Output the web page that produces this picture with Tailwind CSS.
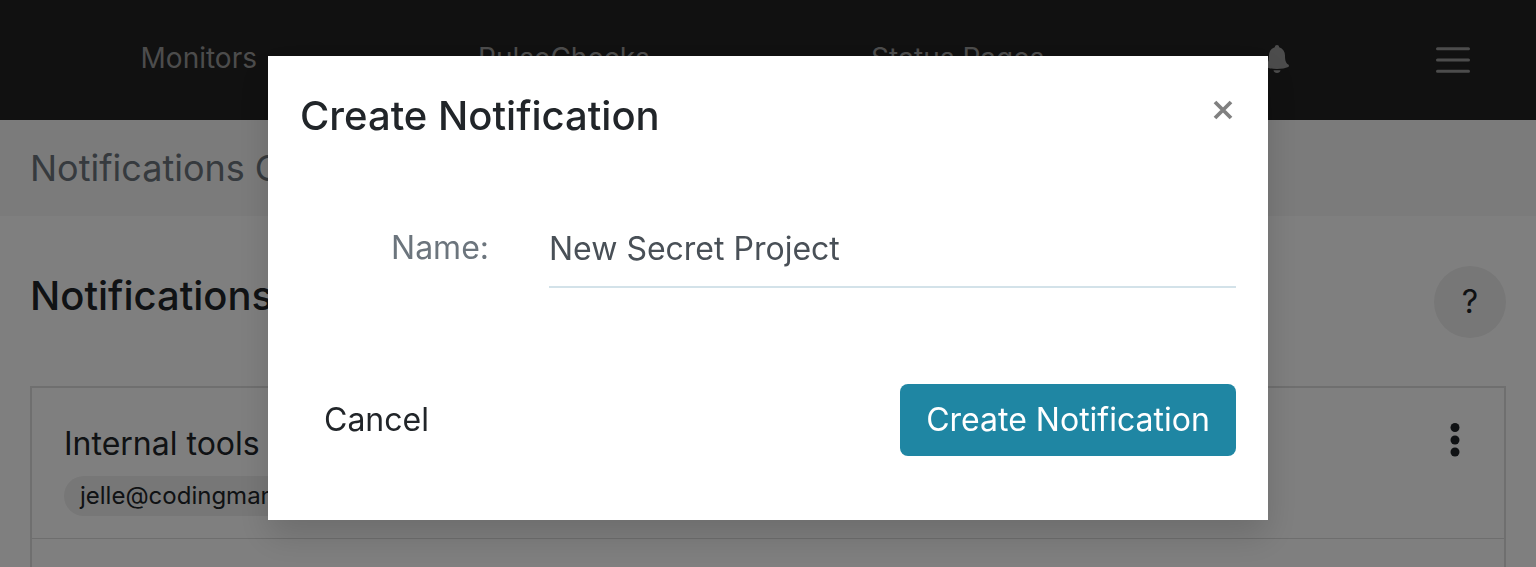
<!DOCTYPE html>
<html lang="en">
<head>
    <meta charset="utf-8"/>
    <meta content="width=device-width, initial-scale=1" name="viewport"/>
    <title>Notifications</title>
    <script src="https://cdn.jsdelivr.net/npm/@tailwindcss/browser@4"></script>
</head>
<body class="flex min-h-screen flex-col bg-white font-['Inter',sans-serif] text-[#212529]">
<header class="flex h-[120px] items-center bg-[#222] px-[30px] text-[28px] leading-10 text-[#999]">
    <nav class="flex flex-1 items-center justify-around pb-1">
        <a href="#">Monitors</a>
        <a href="#">PulseChecks</a>
        <a href="#">Status Pages</a>
        <a href="#" aria-label="Alerts">
            <svg class="mt-0.5 h-7 w-6" viewBox="0 0 24 28" fill="currentColor">
                <path d="M12 0c1.300 0 2 .9 2.200 2.200C18 3.500 20 6.500 20 10.500c0 5 .8 7.500 3.300 9 .9.600.9 2-.1 2.500C20.500 23.300 16.500 24 12 24S3.500 23.300.8 22c-1-.5-1-1.900-.1-2.500C3.200 18 4 15.500 4 10.500c0-4 2-7 5.800-8.300C10 .9 10.700 0 12 0z"/>
                <path d="M8.500 25.200c2.300.2 4.700.2 7 0-.3 1.700-1.700 2.800-3.500 2.800s-3.200-1.100-3.500-2.800z"/>
            </svg>
        </a>
    </nav>
    <button type="button" class="px-9" aria-label="Menu">
        <svg class="h-7 w-[34px]" viewBox="0 0 34 28" stroke="currentColor" stroke-width="3" stroke-linecap="round">
            <path d="M1.500 2.800h31M1.500 14h31M1.500 25.200h31"/>
        </svg>
    </button>
</header>
<div class="flex h-24 items-center bg-[#f7f7f7] px-[30px] text-4xl text-[#6c757d]">Notifications Center</div>
<main class="flex flex-1 flex-col px-[30px] pt-[50px]">
    <div class="flex items-center justify-between">
        <h1 class="pb-3 text-[40px] leading-12 font-medium">Notifications</h1>
        <button type="button" class="size-[72px] rounded-full bg-[#eee] text-[32px]" aria-label="Help">?</button>
    </div>
    <ul class="mt-12 flex-1 border-2 border-b-0 border-[#dedede]">
        <li class="flex items-start justify-between border-b border-[#dcdcdc] px-8 pt-8 pb-[22px]">
            <div>
                <div class="text-[32px] leading-12">Internal tools</div>
                <span class="mt-2 block rounded-full bg-[#eee] px-4 text-2xl leading-10">jelle@codingmammoth.com</span>
            </div>
            <button type="button" class="px-3 pt-[3px]" aria-label="Options">
                <svg class="h-[34px] w-[10px]" viewBox="0 0 10 34" fill="currentColor">
                    <circle cx="5" cy="4.500" r="4.500"/>
                    <circle cx="5" cy="17" r="4.500"/>
                    <circle cx="5" cy="29" r="4.500"/>
                </svg>
            </button>
        </li>
    </ul>
</main>

<!-- Create notification dialog -->
<div class="fixed inset-0 flex items-start justify-center bg-black/50 pt-14">
    <form class="w-[1000px] max-w-full bg-white p-8 pb-16 shadow-[0_16px_32px_rgba(0,0,0,0.15)]" role="dialog" aria-labelledby="dialog-title">
        <div class="flex items-start justify-between">
            <h2 id="dialog-title" class="text-[40px] leading-14 font-medium">Create Notification</h2>
            <button type="button" class="pt-3 pr-[3px] text-[#808080]" aria-label="Close">
                <svg class="size-5" viewBox="0 0 20 20" stroke="currentColor" stroke-width="3.800">
                    <path d="M2 2l16 16M18 2L2 18"/>
                </svg>
            </button>
        </div>
        <div class="mt-16 grid grid-cols-[189px_1fr] gap-15">
            <label for="name" class="text-right text-[32px] leading-20 text-[#6c757d]">Name:</label>
            <input id="name" type="text" value="New Secret Project" class="h-20 w-full border-b-2 border-[#d3e2e9] pt-0.5 text-[32px] text-[#495057] outline-none"/>
        </div>
        <div class="mt-24 flex items-center justify-between">
            <button type="button" class="h-[72px] rounded-lg px-6 text-[32px]">Cancel</button>
            <button type="submit" class="h-[72px] min-w-[336px] rounded-lg bg-[#1f86a3] px-6 text-[32px] text-white">Create Notification</button>
        </div>
    </form>
</div>
</body>
</html>
